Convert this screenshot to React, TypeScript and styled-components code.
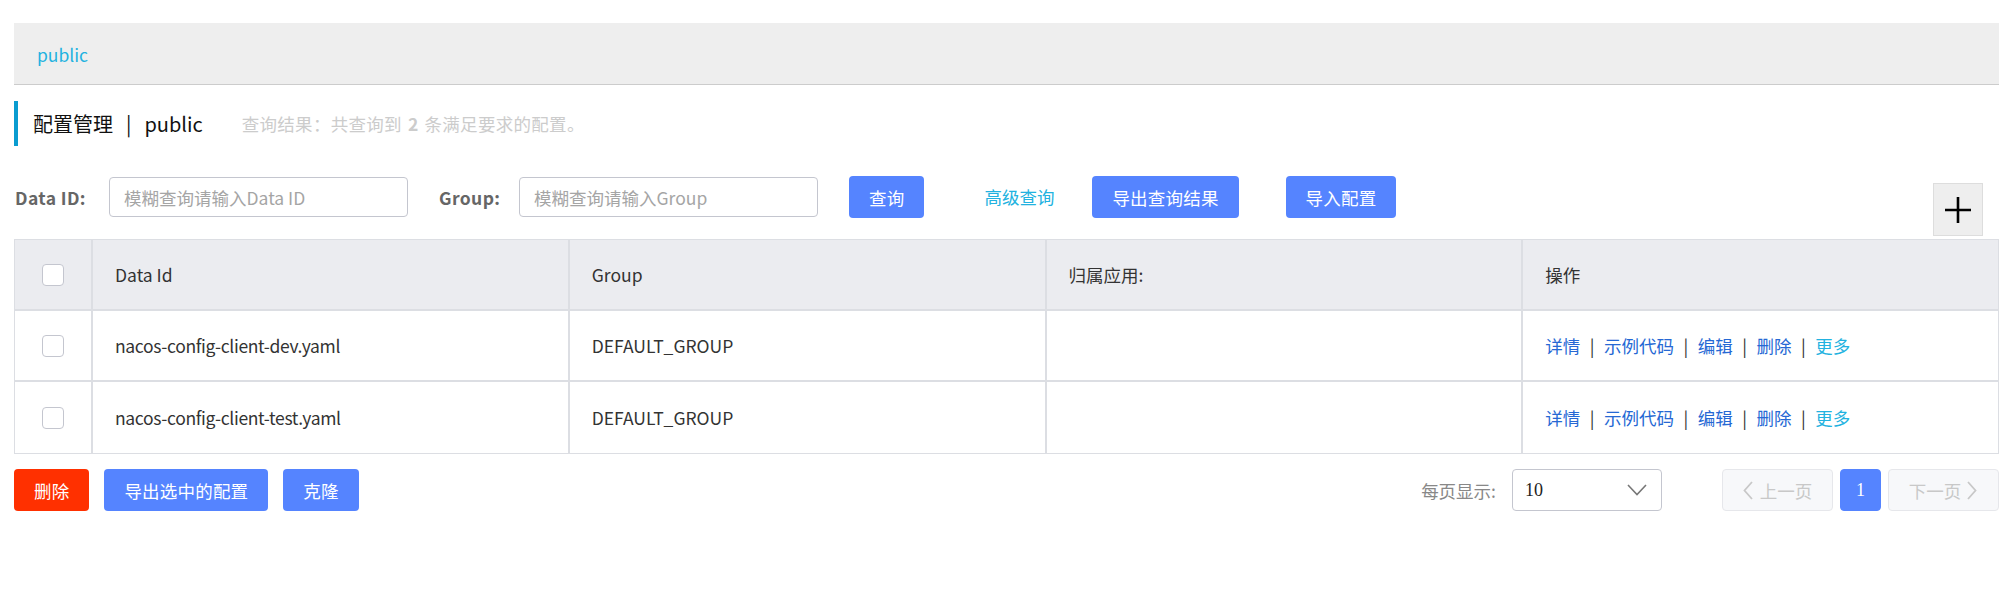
import React from "react";
import styled, { createGlobalStyle } from "styled-components";

const Global = createGlobalStyle`
  html, body { margin: 0; padding: 0; background: #fff; }
  body { font-family: "Noto Sans CJK SC", "Noto Sans", sans-serif; font-size: 17.5px; color: #333; }
  * { box-sizing: border-box; }
`;

const Page = styled.div`
  padding: 23px 9px 40px 14px;
  width: 2008px;
`;

const Crumb = styled.div`
  height: 62px;
  background: #eeeeee;
  border-bottom: 1px solid #cccccc;
  display: flex;
  align-items: center;
  padding-left: 23px;
  padding-top: 2px;
`;

const CrumbLink = styled.span`
  color: #22b2e0;
  font-size: 17.5px;
`;

const TitleBar = styled.div`
  margin-top: 16px;
  height: 45px;
  border-left: 4px solid #0a9cd0;
  display: flex;
  align-items: center;
  padding-left: 15px;
`;

const Title = styled.span`
  font-size: 20px;
  color: #111;
  display: flex;
  align-items: center;
`;

const Sep = styled.span`
  margin: 0 13px;
`;

const Result = styled.span`
  margin-left: 39px;
  font-size: 17.5px;
  color: #cccccc;
  letter-spacing: 0.3px;
  b { font-weight: 700; margin: 0 6px; }
`;

const SearchRow = styled.div`
  margin-top: 30px;
  display: flex;
  align-items: flex-start;
  height: 60px;
`;

const Field = styled.div<{ $ml: number }>`
  display: flex;
  align-items: center;
  gap: 18px;
  margin-left: ${(p) => p.$ml}px;
  height: 42px;
`;

const Label = styled.label<{ $w: number }>`
  width: ${(p) => p.$w}px;
  font-weight: 700;
  color: #666;
  font-size: 17.5px;
  letter-spacing: 0.4px;
`;

const Input = styled.input`
  width: 299px;
  height: 40px;
  border: 1px solid #c4c6cf;
  border-radius: 4px;
  padding: 0 14px;
  font-family: inherit;
  font-size: 17.5px;
  color: #333;
  outline: none;
  &::placeholder { color: #a5a5a5; }
`;

const Btn = styled.button<{ $ml?: number; $danger?: boolean }>`
  height: 42px;
  padding: 0 20px;
  margin-left: ${(p) => p.$ml ?? 0}px;
  border: none;
  border-radius: 4px;
  background: ${(p) => (p.$danger ? "#ff3000" : "#5584ff")};
  color: #fff;
  font-family: inherit;
  font-size: 17.5px;
  letter-spacing: 0.2px;
  cursor: pointer;
  flex: none;
`;

const TextLink = styled.span<{ $ml: number }>`
  margin-left: ${(p) => p.$ml}px;
  height: 42px;
  line-height: 42px;
  color: #22b2e0;
  font-size: 17.5px;
`;

const PlusBox = styled.div`
  margin-left: auto;
  margin-right: 16px;
  margin-top: 7px;
  width: 50px;
  height: 53px;
  background: #eeeeee;
  border: 1px solid #dddddd;
  display: flex;
  align-items: center;
  justify-content: center;
`;

const Table = styled.div`
  margin-top: 3px;
  border: 1px solid #dcdee3;
`;

const Row = styled.div<{ $head?: boolean; $last?: boolean }>`
  display: grid;
  grid-template-columns: 76px repeat(4, 1fr);
  height: 71px;
  background: ${(p) => (p.$head ? "#ebecf0" : "#fff")};
  border-bottom: ${(p) => (p.$last ? "none" : "2px solid #dcdee3")};
`;

const Cell = styled.div<{ $first?: boolean; $tight?: boolean }>`
  display: flex;
  align-items: center;
  justify-content: ${(p) => (p.$first ? "center" : "flex-start")};
  padding-left: ${(p) => (p.$first ? 0 : 22)}px;
  border-left: ${(p) => (p.$first ? "none" : "2px solid #dcdee3")};
  color: #333;
  font-size: 17.5px;
  letter-spacing: ${(p) => (p.$tight ? "-0.35px" : "0")};
`;

const Check = styled.span`
  width: 22px;
  height: 22px;
  border: 1px solid #c4c6cf;
  border-radius: 4px;
  background: #fff;
  display: inline-block;
`;

const Actions = styled.div`
  display: flex;
  align-items: center;
`;

const Act = styled.span<{ $more?: boolean }>`
  color: ${(p) => (p.$more ? "#22b2e0" : "#2668d4")};
`;

const Bar = styled.span`
  color: #333;
  margin: 0 9.5px;
`;

const Footer = styled.div`
  margin-top: 15px;
  display: flex;
  align-items: center;
`;

const Pager = styled.div`
  margin-left: auto;
  display: flex;
  align-items: center;
`;

const PerPage = styled.span`
  color: #888;
  font-size: 17.5px;
  margin-right: 16px;
`;

const Select = styled.div`
  width: 150px;
  height: 42px;
  border: 1px solid #c4c6cf;
  border-radius: 4px;
  display: flex;
  align-items: center;
  justify-content: space-between;
  padding: 0 14px 0 12px;
  margin-right: 53px;
`;

const SelectVal = styled.span`
  font-family: "Liberation Serif", serif;
  font-size: 18px;
  color: #222;
`;

const PageBtn = styled.div<{ $active?: boolean; $w: number }>`
  width: ${(p) => p.$w}px;
  height: 42px;
  border-radius: 4px;
  border: 1px solid ${(p) => (p.$active ? "#5584ff" : "#e6e7eb")};
  background: ${(p) => (p.$active ? "#5584ff" : "#f7f8fa")};
  color: ${(p) => (p.$active ? "#fff" : "#c8c8c8")};
  display: flex;
  align-items: center;
  justify-content: center;
  gap: 6px;
  font-size: 17.5px;
  margin-left: 7px;
`;

const PageNum = styled.span`
  font-family: "Liberation Serif", serif;
  font-size: 18px;
`;

const Chevron = ({ dir, color }: { dir: "left" | "right" | "down"; color: string }) => {
  if (dir === "down") {
    return (
      <svg width="20" height="12" viewBox="0 0 20 12">
        <path d="M1 1 L10 10.5 L19 1" fill="none" stroke={color} strokeWidth="1.6" />
      </svg>
    );
  }
  const d = dir === "left" ? "M9 1 L1.5 9.5 L9 18" : "M1 1 L8.5 9.5 L1 18";
  return (
    <svg width="11" height="19" viewBox="0 0 11 19">
      <path d={d} fill="none" stroke={color} strokeWidth="1.8" />
    </svg>
  );
};

const rows = [
  { id: "nacos-config-client-dev.yaml", group: "DEFAULT_GROUP" },
  { id: "nacos-config-client-test.yaml", group: "DEFAULT_GROUP" },
];

export default function App() {
  return (
    <>
      <Global />
      <Page>
        <Crumb>
          <CrumbLink>public</CrumbLink>
        </Crumb>
        <TitleBar>
          <Title>
            配置管理<Sep>|</Sep>public
          </Title>
          <Result>
            查询结果：共查询到<b>2</b>条满足要求的配置。
          </Result>
        </TitleBar>
        <SearchRow>
          <Field $ml={1}>
            <Label $w={76}>Data ID:</Label>
            <Input placeholder="模糊查询请输入Data ID" />
          </Field>
          <Field $ml={31}>
            <Label $w={62}>Group:</Label>
            <Input placeholder="模糊查询请输入Group" />
          </Field>
          <Btn $ml={31}>查询</Btn>
          <TextLink $ml={60}>高级查询</TextLink>
          <Btn $ml={38}>导出查询结果</Btn>
          <Btn $ml={47}>导入配置</Btn>
          <PlusBox>
            <svg width="28" height="28" viewBox="0 0 28 28">
              <path d="M14 1 V27 M1 14 H27" stroke="#000" strokeWidth="2.6" />
            </svg>
          </PlusBox>
        </SearchRow>
        <Table>
          <Row $head>
            <Cell $first>
              <Check />
            </Cell>
            <Cell>Data Id</Cell>
            <Cell>Group</Cell>
            <Cell>归属应用:</Cell>
            <Cell>操作</Cell>
          </Row>
          {rows.map((r, i) => (
            <Row key={r.id} $last={i === rows.length - 1}>
              <Cell $first>
                <Check />
              </Cell>
              <Cell $tight>{r.id}</Cell>
              <Cell>{r.group}</Cell>
              <Cell />
              <Cell>
                <Actions>
                  <Act>详情</Act>
                  <Bar>|</Bar>
                  <Act>示例代码</Act>
                  <Bar>|</Bar>
                  <Act>编辑</Act>
                  <Bar>|</Bar>
                  <Act>删除</Act>
                  <Bar>|</Bar>
                  <Act $more>更多</Act>
                </Actions>
              </Cell>
            </Row>
          ))}
        </Table>
        <Footer>
          <Btn $danger>删除</Btn>
          <Btn $ml={15}>导出选中的配置</Btn>
          <Btn $ml={15}>克隆</Btn>
          <Pager>
            <PerPage>每页显示:</PerPage>
            <Select>
              <SelectVal>10</SelectVal>
              <Chevron dir="down" color="#777" />
            </Select>
            <PageBtn $w={111}>
              <Chevron dir="left" color="#c8c8c8" />
              上一页
            </PageBtn>
            <PageBtn $w={41} $active>
              <PageNum>1</PageNum>
            </PageBtn>
            <PageBtn $w={111}>
              下一页
              <Chevron dir="right" color="#c8c8c8" />
            </PageBtn>
          </Pager>
        </Footer>
      </Page>
    </>
  );
}
